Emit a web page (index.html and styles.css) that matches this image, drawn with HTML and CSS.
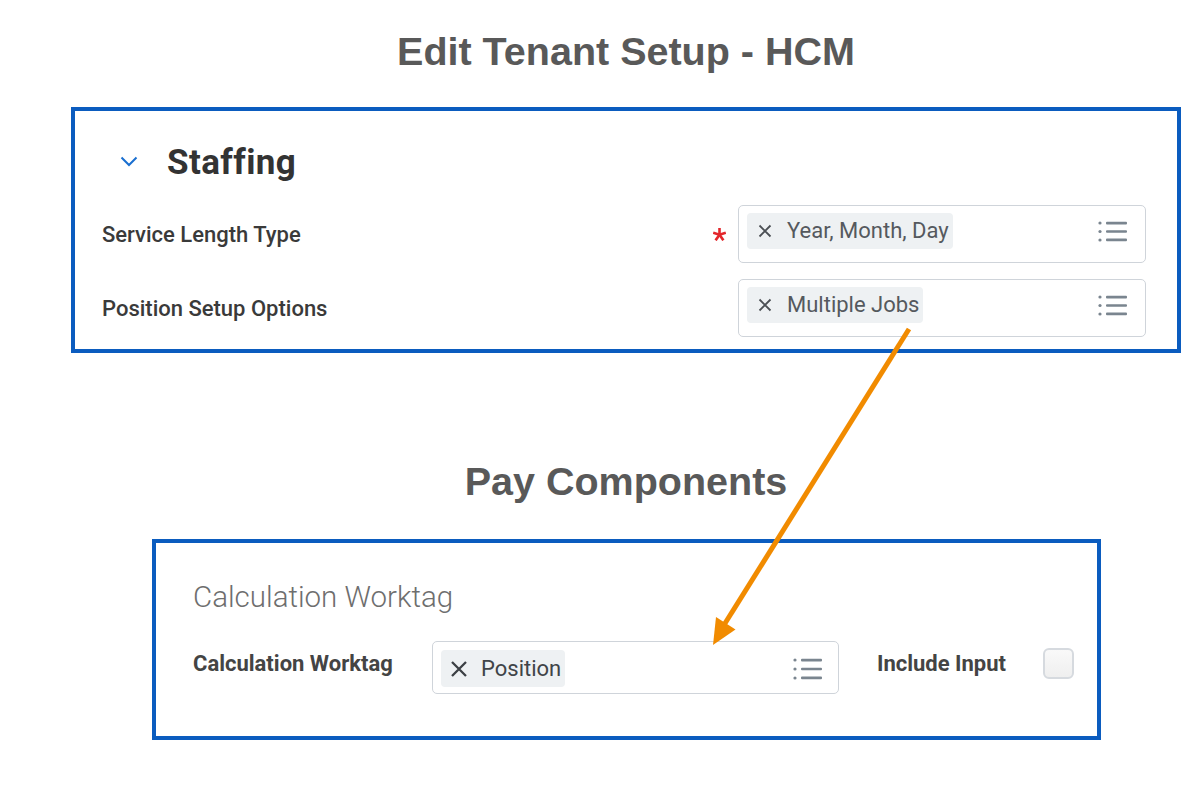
FILE: index.html
```html
<!DOCTYPE html>
<html lang="en">
<head>
<meta charset="utf-8">
<title>Edit Tenant Setup - HCM</title>
<link rel="stylesheet" href="styles.css">
</head>
<body>
<div class="page">
  <h1 class="title">Edit Tenant Setup - HCM</h1>

  <section class="panel panel-top">
    <div class="section-head">
      <svg class="chevron" width="18" height="11" viewBox="0 0 18 11"><polyline points="1.5,1.5 9,9 16.5,1.5" fill="none" stroke="#1a6fd0" stroke-width="2"/></svg>
      <h2 class="section-title">Staffing</h2>
    </div>

    <div class="field-row">
      <div class="field-label">Service Length Type</div>
      <div class="req-slot">
        <svg class="req" width="13" height="13" viewBox="0 0 12 12"><g stroke="#e3262b" stroke-width="2.4"><line x1="6" y1="6.2" x2="6" y2="0"/><line x1="6" y1="6.2" x2="11.8" y2="4.3"/><line x1="6" y1="6.2" x2="9.6" y2="11.4"/><line x1="6" y1="6.2" x2="2.4" y2="11.4"/><line x1="6" y1="6.2" x2="0.2" y2="4.3"/></g></svg>
      </div>
      <div class="prompt">
        <span class="chip">
          <svg class="chip-x" width="14" height="14" viewBox="0 0 14 14"><path d="M1.5 1.5 L12.5 12.5 M12.5 1.5 L1.5 12.5" stroke="#4b4f54" stroke-width="1.8" fill="none"/></svg>
          <span class="chip-text">Year, Month, Day</span>
        </span>
        <svg class="list-icon" width="29" height="21" viewBox="0 0 29 21"><g fill="#7a858f"><circle cx="2" cy="2" r="1.6"/><circle cx="2" cy="10.5" r="1.6"/><circle cx="2" cy="19" r="1.6"/><rect x="8" y="0.8" width="21" height="2.6" rx="1"/><rect x="8" y="9.2" width="21" height="2.6" rx="1"/><rect x="8" y="17.6" width="21" height="2.6" rx="1"/></g></svg>
      </div>
    </div>

    <div class="field-row">
      <div class="field-label">Position Setup Options</div>
      <div class="req-slot"></div>
      <div class="prompt">
        <span class="chip">
          <svg class="chip-x" width="14" height="14" viewBox="0 0 14 14"><path d="M1.5 1.5 L12.5 12.5 M12.5 1.5 L1.5 12.5" stroke="#4b4f54" stroke-width="1.8" fill="none"/></svg>
          <span class="chip-text">Multiple Jobs</span>
        </span>
        <svg class="list-icon" width="29" height="21" viewBox="0 0 29 21"><g fill="#7a858f"><circle cx="2" cy="2" r="1.6"/><circle cx="2" cy="10.5" r="1.6"/><circle cx="2" cy="19" r="1.6"/><rect x="8" y="0.8" width="21" height="2.6" rx="1"/><rect x="8" y="9.2" width="21" height="2.6" rx="1"/><rect x="8" y="17.6" width="21" height="2.6" rx="1"/></g></svg>
      </div>
    </div>
  </section>

  <h1 class="title title-pay">Pay Components</h1>

  <section class="panel panel-bottom">
    <h3 class="group-title">Calculation Worktag</h3>
    <div class="calc-row">
      <div class="calc-label">Calculation Worktag</div>
      <div class="prompt prompt-sm">
        <span class="chip chip-sm">
          <svg class="chip-x-lg" width="18" height="18" viewBox="0 0 18 18"><path d="M2 2 L16 16 M16 2 L2 16" stroke="#3c4045" stroke-width="2.3" fill="none"/></svg>
          <span class="chip-text chip-text-dark">Position</span>
        </span>
        <svg class="list-icon" width="29" height="22" viewBox="0 0 29 22"><g fill="#7a858f"><circle cx="2" cy="2" r="1.6"/><circle cx="2" cy="11" r="1.6"/><circle cx="2" cy="20" r="1.6"/><rect x="8" y="0.8" width="21" height="2.6" rx="1"/><rect x="8" y="9.7" width="21" height="2.6" rx="1"/><rect x="8" y="18.6" width="21" height="2.6" rx="1"/></g></svg>
      </div>
      <div class="calc-label include-label">Include Input</div>
      <span class="checkbox"></span>
    </div>
  </section>

  <svg class="arrow" width="1200" height="790" viewBox="0 0 1200 790">
    <line x1="909" y1="329" x2="724" y2="625" stroke="#f18b00" stroke-width="5"/>
    <polygon points="713,645 735.5,629.5 716,617" fill="#f18b00"/>
  </svg>
</div>
</body>
</html>
```

FILE: styles.css
```css
* { box-sizing: border-box; }

html, body {
  margin: 0;
  padding: 0;
  background: #ffffff;
}

.page {
  position: relative;
  width: 1200px;
  height: 790px;
  display: flex;
  flex-direction: column;
  align-items: flex-start;
  font-family: Roboto, "Liberation Sans", sans-serif;
  overflow: hidden;
}

.title {
  margin: 31px 0 0 0;
  width: 100%;
  padding-left: 52px;
  text-align: center;
  font-family: "Liberation Sans", Arial, sans-serif;
  font-weight: 700;
  font-size: 39.5px;
  line-height: 40px;
  color: #595959;
}

.title-pay {
  margin-top: 108px;
}

.panel {
  border: 4px solid #0b5cbf;
  background: #ffffff;
}

.panel-top {
  margin-top: 36px;
  margin-left: 71px;
  width: 1110px;
  padding: 32px 31px 12px 27px;
  display: flex;
  flex-direction: column;
}

.section-head {
  display: flex;
  align-items: center;
  height: 40px;
  padding-left: 18px;
}

.chevron {
  display: block;
  margin-top: -3px;
}

.section-title {
  margin: 0 0 0 29px;
  font-size: 35px;
  letter-spacing: 0.4px;
  line-height: 40px;
  font-weight: 700;
  color: #333333;
}

.field-row {
  display: flex;
  align-items: center;
  margin-top: 16px;
}

.section-head + .field-row {
  margin-top: 22px;
}

.field-label {
  flex: 1;
  font-size: 22px;
  font-weight: 500;
  color: #3a3a3a;
}

.req-slot {
  width: 25px;
  height: 13px;
  padding-right: 12px;
  display: flex;
  align-items: center;
}

.req {
  display: block;
}

.prompt {
  width: 408px;
  height: 58px;
  border: 1px solid #cfd4da;
  border-radius: 5px;
  background: #ffffff;
  display: flex;
  align-items: center;
  justify-content: space-between;
  padding: 7px 18px 13px 8px;
}

.chip {
  height: 36px;
  display: inline-flex;
  align-items: center;
  background: #eef1f3;
  border-radius: 4px;
  padding: 0 4px 0 11px;
}

.chip-x {
  display: block;
  margin-right: 15px;
}

.chip-text {
  font-size: 22px;
  color: #55595e;
  line-height: 36px;
}

.list-icon {
  display: block;
}

.panel-bottom {
  margin-top: 38px;
  margin-left: 152px;
  width: 949px;
  padding: 37px 20px 42px 37px;
}

.group-title {
  margin: 0;
  font-size: 29.5px;
  font-weight: 300;
  line-height: 34px;
  color: #6e6e6e;
}

.calc-row {
  display: flex;
  align-items: center;
  margin-top: 27px;
}

.calc-label {
  width: 239px;
  font-size: 22px;
  font-weight: 700;
  color: #444444;
  margin-top: -8px;
}

.prompt-sm {
  width: 407px;
  height: 53px;
  padding: 8px 16px 6px 8px;
}

.chip-sm {
  height: 37px;
  padding: 0 4px 0 9px;
}

.chip-x-lg {
  display: block;
  margin-right: 13px;
}

.chip-text-dark {
  font-size: 22px;
  color: #404448;
}

.include-label {
  width: auto;
  margin-left: 38px;
}

.checkbox {
  display: block;
  width: 31px;
  height: 31px;
  margin-left: 37px;
  margin-top: -8px;
  border: 2px solid #d6dadf;
  border-radius: 6px;
  background: linear-gradient(#f9f9f9, #efefef);
}

.arrow {
  position: absolute;
  left: 0;
  top: 0;
  pointer-events: none;
}
```
